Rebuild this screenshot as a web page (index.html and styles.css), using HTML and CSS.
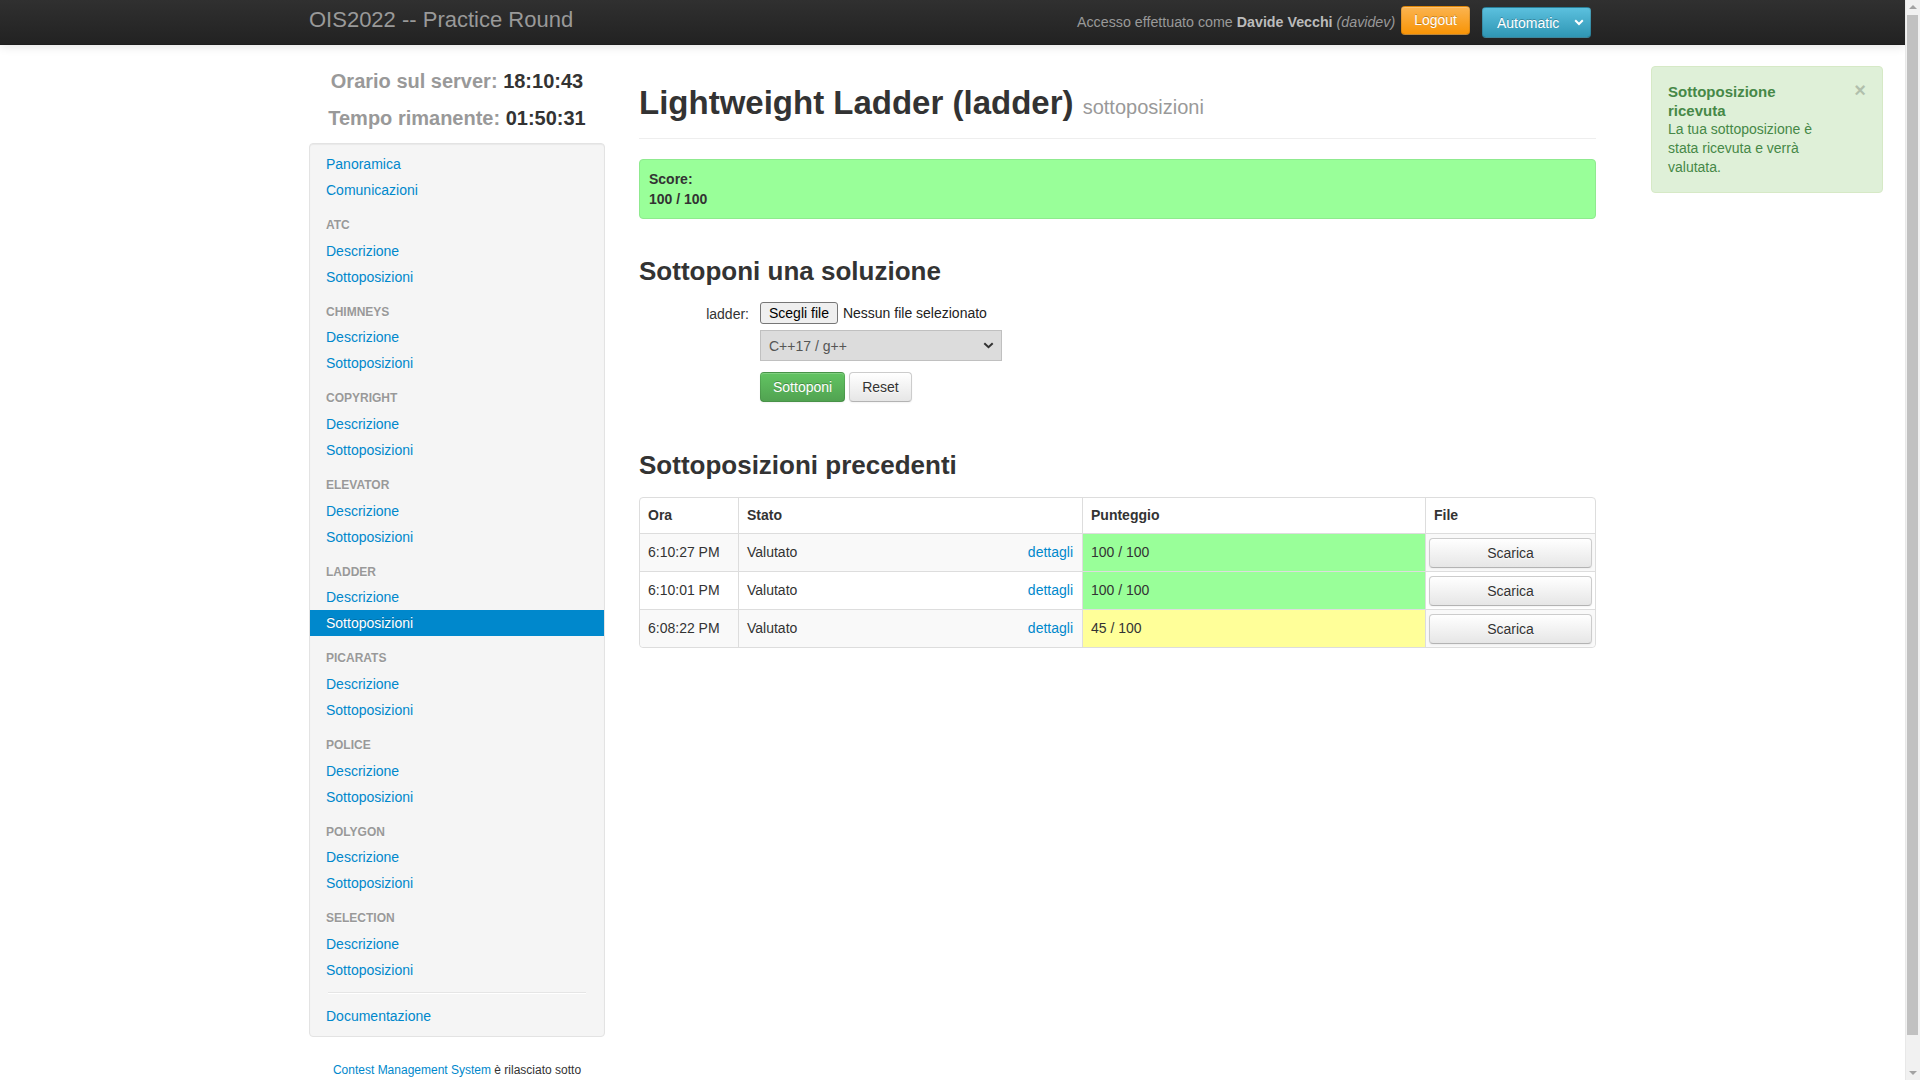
FILE: index.html
```html
<!DOCTYPE html>
<html lang="it">
<head>
<meta charset="utf-8">
<title>OIS2022 -- Practice Round</title>
<link rel="stylesheet" href="styles.css">
</head>
<body>
<div class="navbar">
  <div class="nav-inner">
    <span class="brand">OIS2022 -- Practice Round</span>
    <div class="nav-right">
      <span class="nav-text">Accesso effettuato come <strong>Davide Vecchi</strong> <em>(davidev)</em></span>
      <button class="btn btn-warning btn-logout">Logout</button>
      <div class="lang-select">
        <span>Automatic</span>
        <svg width="10" height="7" viewBox="0 0 10 7"><path d="M1.2 1.3 L5 5 L8.8 1.3" fill="none" stroke="#fff" stroke-width="2"/></svg>
      </div>
    </div>
  </div>
</div>

<div class="layout">
  <div class="side-col">
    <div class="countdown">
      <div><span class="cd-label">Orario sul server:</span> <span class="cd-value">18:10:43</span></div>
      <div><span class="cd-label">Tempo rimanente:</span> <span class="cd-value">01:50:31</span></div>
    </div>
    <div class="well">
      <ul class="nav-list">
        <li><a href="#">Panoramica</a></li>
        <li><a href="#">Comunicazioni</a></li>
        <li class="nav-header">ATC</li>
        <li><a href="#">Descrizione</a></li>
        <li><a href="#">Sottoposizioni</a></li>
        <li class="nav-header">chimneys</li>
        <li><a href="#">Descrizione</a></li>
        <li><a href="#">Sottoposizioni</a></li>
        <li class="nav-header">copyright</li>
        <li><a href="#">Descrizione</a></li>
        <li><a href="#">Sottoposizioni</a></li>
        <li class="nav-header">elevator</li>
        <li><a href="#">Descrizione</a></li>
        <li><a href="#">Sottoposizioni</a></li>
        <li class="nav-header">ladder</li>
        <li><a href="#">Descrizione</a></li>
        <li><a href="#" class="active">Sottoposizioni</a></li>
        <li class="nav-header">picarats</li>
        <li><a href="#">Descrizione</a></li>
        <li><a href="#">Sottoposizioni</a></li>
        <li class="nav-header">police</li>
        <li><a href="#">Descrizione</a></li>
        <li><a href="#">Sottoposizioni</a></li>
        <li class="nav-header">polygon</li>
        <li><a href="#">Descrizione</a></li>
        <li><a href="#">Sottoposizioni</a></li>
        <li class="nav-header">selection</li>
        <li><a href="#">Descrizione</a></li>
        <li><a href="#">Sottoposizioni</a></li>
        <li class="divider"></li>
        <li><a href="#">Documentazione</a></li>
      </ul>
    </div>
    <div class="footer">
      <a href="#">Contest Management System</a> è rilasciato sotto la licenza <a href="#">GNU Affero General Public License</a>.
    </div>
  </div>

  <div class="content">
    <div class="page-header">
      <h1>Lightweight Ladder (ladder) <small>sottoposizioni</small></h1>
    </div>

    <div class="alert-score">
      <div>Score:</div>
      <div>100 / 100</div>
    </div>

    <h2>Sottoponi una soluzione</h2>
    <div class="submit-form">
      <div class="control-label">ladder:</div>
      <div class="controls">
        <div class="file-row">
          <span class="file-btn">Scegli file</span>
          <span class="file-name">Nessun file selezionato</span>
        </div>
        <div class="select-box">
          <span>C++17 / g++</span>
          <svg width="11" height="7" viewBox="0 0 11 7"><path d="M1.3 1.2 L5.5 5.2 L9.7 1.2" fill="none" stroke="#333" stroke-width="2"/></svg>
        </div>
        <div class="form-actions">
          <button class="btn btn-success">Sottoponi</button>
          <button class="btn">Reset</button>
        </div>
      </div>
    </div>

    <h2 class="h2-prev">Sottoposizioni precedenti</h2>
    <table class="sub-table">
      <thead>
        <tr><th class="c-ora">Ora</th><th class="c-stato">Stato</th><th class="c-punt">Punteggio</th><th class="c-file">File</th></tr>
      </thead>
      <tbody>
        <tr>
          <td>6:10:27 PM</td>
          <td><div class="stato"><span>Valutato</span><a href="#">dettagli</a></div></td>
          <td class="score-full">100 / 100</td>
          <td class="file-cell"><button class="btn btn-block">Scarica</button></td>
        </tr>
        <tr>
          <td>6:10:01 PM</td>
          <td><div class="stato"><span>Valutato</span><a href="#">dettagli</a></div></td>
          <td class="score-full">100 / 100</td>
          <td class="file-cell"><button class="btn btn-block">Scarica</button></td>
        </tr>
        <tr>
          <td>6:08:22 PM</td>
          <td><div class="stato"><span>Valutato</span><a href="#">dettagli</a></div></td>
          <td class="score-partial">45 / 100</td>
          <td class="file-cell"><button class="btn btn-block">Scarica</button></td>
        </tr>
      </tbody>
    </table>
  </div>
</div>

<div class="notifications">
  <div class="notice">
    <span class="close">&times;</span>
    <div class="notice-title">Sottoposizione ricevuta</div>
    <div class="notice-text">La tua sottoposizione è stata ricevuta e verrà valutata.</div>
  </div>
</div>

<div class="fake-scrollbar" aria-hidden="true">
  <div class="sb-arrow sb-up"></div>
  <div class="sb-thumb"></div>
  <div class="sb-arrow sb-down"></div>
</div>
</body>
</html>
```

FILE: styles.css
```css
* { box-sizing: border-box; }
html, body { margin: 0; padding: 0; }
body {
  margin-right: 15px;
  font-family: "Liberation Sans", Arial, Helvetica, sans-serif;
  font-size: 14px;
  line-height: 20px;
  color: #333;
  background: #fff;
}
a { color: #0088cc; text-decoration: none; }

/* navbar */
.navbar {
  height: 45px;
  background: linear-gradient(#303030, #222222);
  border-bottom: 1px solid #1e1e1e;
  box-shadow: 0 1px 10px rgba(0,0,0,.12);
}
.nav-inner {
  width: 1287px;
  margin: 0 auto;
  padding-right: 5px;
  display: flex;
  justify-content: space-between;
  align-items: flex-start;
}
.brand {
  font-size: 22px;
  line-height: 39px;
  color: #999;
  font-weight: normal;
}
.nav-right { display: flex; align-items: flex-start; }
.nav-text { margin-top: 12px; color: #999; font-size: 14.25px; }
.nav-text strong { color: #bbb; }
.nav-text em { font-style: italic; }

/* buttons */
.btn {
  display: inline-block;
  margin: 0;
  padding: 4px 12px;
  font-family: inherit;
  font-size: 14px;
  line-height: 20px;
  color: #333;
  text-align: center;
  text-shadow: 0 1px 1px rgba(255,255,255,.75);
  background: linear-gradient(#ffffff, #e6e6e6);
  border: 1px solid #cccccc;
  border-bottom-color: #b3b3b3;
  border-radius: 4px;
  box-shadow: inset 0 1px 0 rgba(255,255,255,.2), 0 1px 2px rgba(0,0,0,.05);
  cursor: pointer;
}
.btn-success {
  color: #fff;
  text-shadow: 0 -1px 0 rgba(0,0,0,.25);
  background: linear-gradient(#62c462, #51a351);
  border-color: rgba(0,0,0,.1) rgba(0,0,0,.1) rgba(0,0,0,.25);
}
.btn-warning {
  color: #fff;
  text-shadow: 0 -1px 0 rgba(0,0,0,.25);
  background: linear-gradient(#fbb450, #f89406);
  border-color: rgba(0,0,0,.1) rgba(0,0,0,.1) rgba(0,0,0,.25);
}
.btn-logout { margin-top: 6px; margin-left: 6px; line-height: 19px; }
.btn-block { display: block; width: 100%; }

.lang-select {
  margin-top: 7px;
  margin-left: 12px;
  width: 109px;
  height: 31px;
  padding: 0 6px 0 14px;
  display: flex;
  align-items: center;
  justify-content: space-between;
  color: #fff;
  text-shadow: 0 -1px 0 rgba(0,0,0,.25);
  background: linear-gradient(#5bc0de, #2f96b4);
  border: 1px solid rgba(0,0,0,.15);
  border-bottom-color: rgba(0,0,0,.3);
  border-radius: 4px;
}

/* layout */
.layout {
  width: 1287px;
  margin: 0 auto;
  display: grid;
  grid-template-columns: 296px 957px;
  column-gap: 34px;
  align-items: start;
}

.countdown {
  margin-top: 18px;
  margin-bottom: 6px;
  text-align: center;
  font-size: 20px;
  line-height: 37px;
  font-weight: bold;
}
.cd-label { color: #999; }
.cd-value { color: #333; }

.well {
  background: #f5f5f5;
  border: 1px solid #e3e3e3;
  border-radius: 4px;
  box-shadow: inset 0 1px 1px rgba(0,0,0,.05);
  padding: 7px 0;
}
.nav-list { list-style: none; margin: 0; padding: 0; }
.nav-list a { display: block; padding: 3px 16px; line-height: 20px; }
.nav-list a.active {
  background: #0088cc;
  color: #fff;
  text-shadow: 0 -1px 0 rgba(0,0,0,.2);
}
.nav-header {
  margin-top: 9px;
  padding: 4px 16px 2px;
  font-size: 12px;
  line-height: 19.67px;
  font-weight: bold;
  color: #999;
  text-transform: uppercase;
  text-shadow: 0 1px 0 rgba(255,255,255,.5);
}
.divider {
  height: 2px;
  margin: 9px 18px;
  background: #e5e5e5;
  border-bottom: 1px solid #fff;
}

.footer {
  width: 256px;
  margin: 24px auto 30px;
  text-align: center;
  font-size: 12px;
  line-height: 18px;
}

/* content */
.page-header {
  margin-top: 38px;
  padding-bottom: 15px;
  border-bottom: 1px solid #eee;
}
h1 { margin: 0; font-size: 33px; line-height: 40px; font-weight: bold; }
h1 small { font-size: 20px; line-height: 1; font-weight: normal; color: #999; }

.alert-score {
  margin-top: 20px;
  padding: 9px;
  background: #99ff99;
  border: 1px solid #8fea8f;
  border-radius: 4px;
  font-weight: bold;
}

h2 { margin: 32px 0 0; font-size: 26px; line-height: 40px; font-weight: bold; }
.h2-prev { margin-top: 43px; }

.submit-form {
  margin-top: 11px;
  display: grid;
  grid-template-columns: 110px 1fr;
  column-gap: 11px;
  align-items: start;
}
.control-label { text-align: right; padding-top: 2px; }
.controls { display: flex; flex-direction: column; align-items: flex-start; }
.file-row { display: flex; align-items: center; height: 22px; }
.file-btn {
  height: 22px;
  padding: 0 8px;
  line-height: 20px;
  color: #000;
  background: #efefef;
  border: 1px solid #767676;
  border-radius: 3px;
}
.file-name { margin-left: 5px; color: #222; }
.select-box {
  margin-top: 6px;
  width: 242px;
  height: 31px;
  padding: 0 7px 0 8px;
  display: flex;
  align-items: center;
  justify-content: space-between;
  color: #555;
  background: #dcdcdc;
  border: 1px solid #c0c0c0;
}
.form-actions { margin-top: 11px; display: flex; gap: 4px; }

/* table */
.sub-table {
  margin-top: 12px;
  width: 957px;
  table-layout: fixed;
  border-collapse: separate;
  border-spacing: 0;
  border: 1px solid #ddd;
  border-radius: 4px;
}
.sub-table th, .sub-table td {
  padding: 8px;
  line-height: 20px;
  text-align: left;
  vertical-align: top;
  border-left: 1px solid #ddd;
  border-top: 1px solid #ddd;
}
.sub-table th { line-height: 19px; font-weight: bold; border-top: 0; }
.sub-table th:first-child, .sub-table td:first-child { border-left: 0; }
.c-ora { width: 98px; }
.c-stato { width: 344px; }
.c-punt { width: 343px; }
.sub-table tbody tr:nth-child(odd) td { background: #f9f9f9; }
.sub-table tbody tr td.score-full { background: #99ff99; }
.sub-table tbody tr td.score-partial { background: #ffff99; }
.sub-table td.file-cell { padding: 4px 3px 3px; }
.sub-table tbody tr:last-child td:first-child { border-bottom-left-radius: 4px; }
.sub-table tbody tr:last-child td:last-child { border-bottom-right-radius: 4px; }
.stato { display: flex; justify-content: space-between; padding-right: 1px; }

/* notifications */
.notifications {
  position: fixed;
  top: 66px;
  right: 37px;
  width: 232px;
}
.notice {
  position: relative;
  padding: 15px 59px 15px 16px;
  color: #468847;
  background: #dff0d8;
  border: 1px solid #d6e9c6;
  border-radius: 4px;
  line-height: 19px;
}
.notice-title { font-size: 15px; font-weight: bold; }
.notice-text { font-size: 14px; }
.close {
  position: absolute;
  top: 13px;
  right: 16px;
  font-size: 20px;
  line-height: 20px;
  font-weight: bold;
  color: #000;
  opacity: .2;
}

/* window scrollbar as in the screenshot */
.fake-scrollbar {
  position: fixed;
  top: 0;
  right: 0;
  width: 15px;
  height: 100vh;
  display: flex;
  flex-direction: column;
  background: #f1f1f1;
  border-left: 1px solid #e8e8e8;
}
.sb-arrow { height: 15px; flex: none; position: relative; }
.sb-up::after, .sb-down::after {
  content: "";
  position: absolute;
  left: 3px;
  border-left: 4px solid transparent;
  border-right: 4px solid transparent;
}
.sb-up::after { top: 5px; border-bottom: 4px solid #a3a3a3; }
.sb-down::after { top: 6px; border-top: 4px solid #a3a3a3; }
.sb-thumb {
  flex: 1;
  margin: 0 2px 30px 1px;
  background: #c1c1c1;
}
```
